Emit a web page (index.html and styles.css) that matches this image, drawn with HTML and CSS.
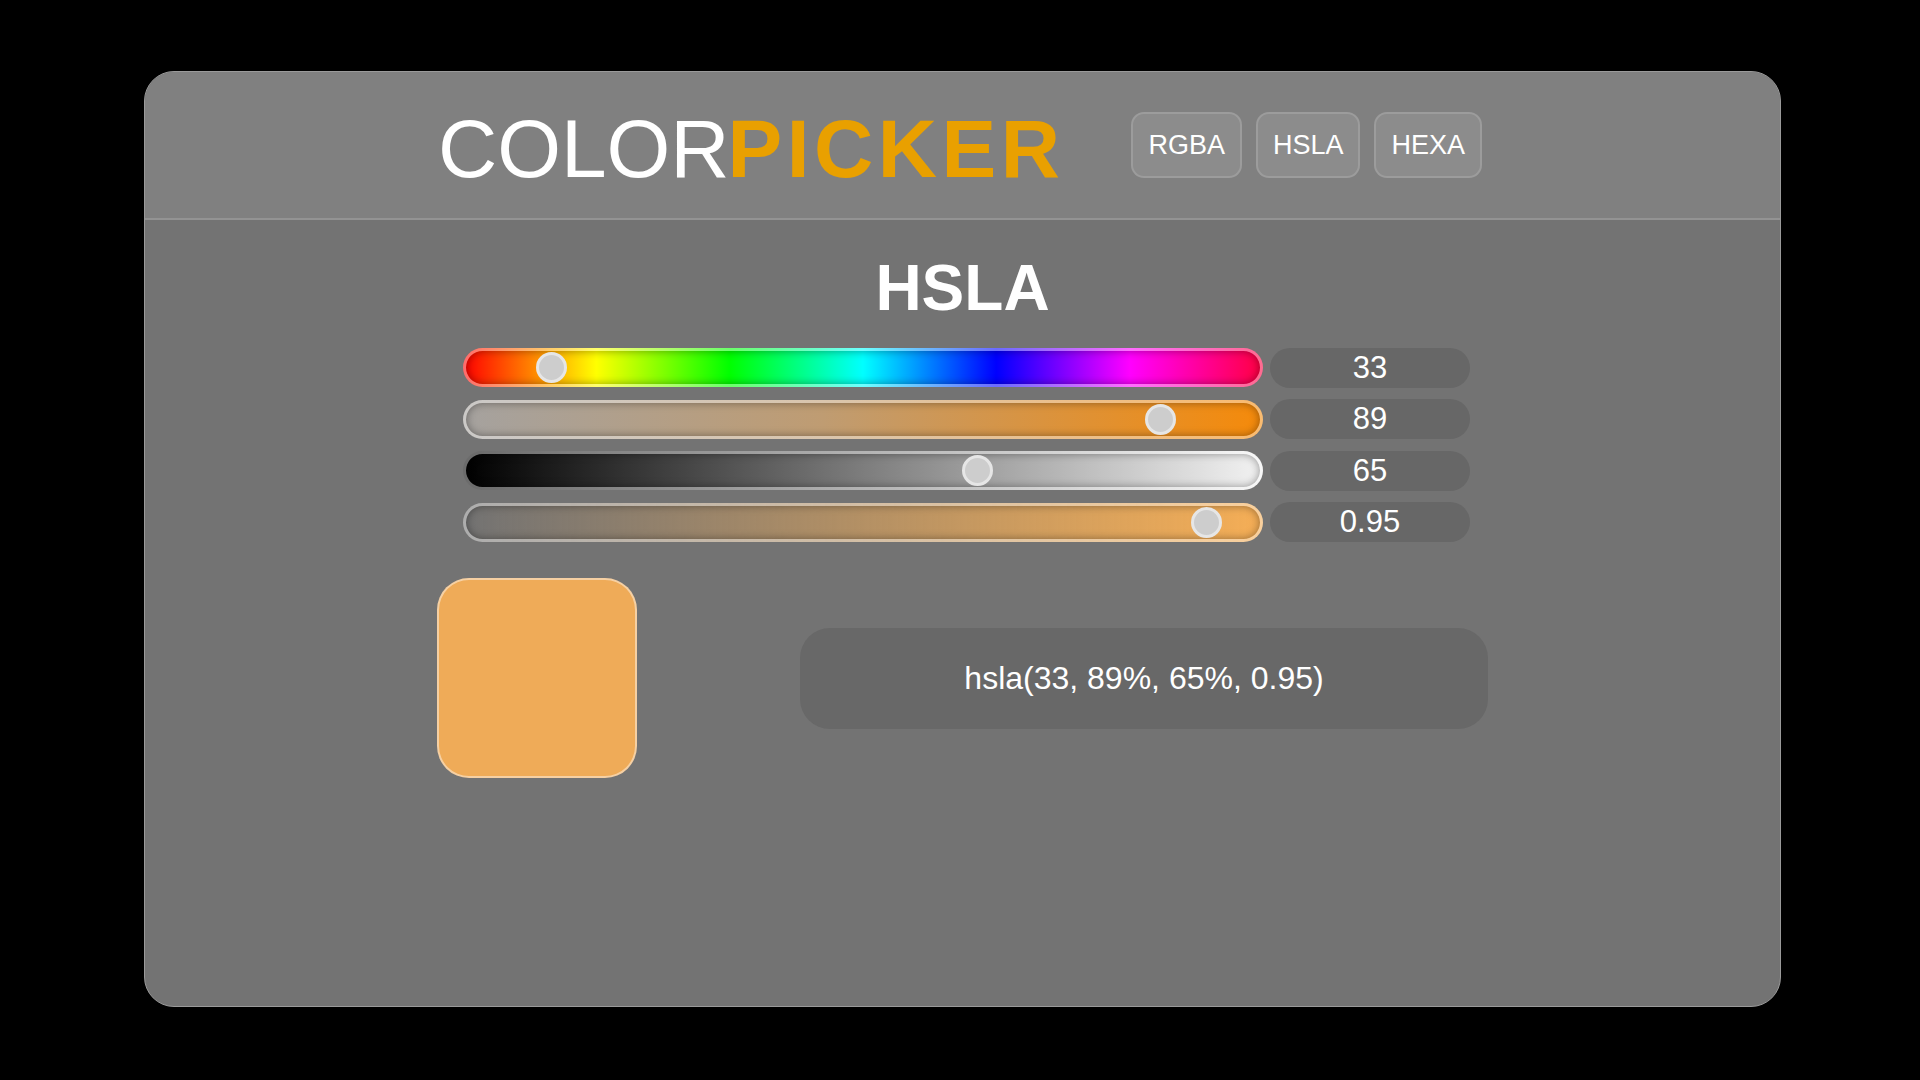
FILE: index.html
```html
<!DOCTYPE html>
<html lang="en">
<head>
<meta charset="utf-8">
<title>Color Picker</title>
<link rel="stylesheet" href="styles.css">
</head>
<body>
<div class="card">
  <header class="header">
    <h1 class="logo"><span class="logo-light">COLOR</span><span class="logo-bold">PICKER</span></h1>
    <nav class="modes">
      <button class="mode">RGBA</button>
      <button class="mode">HSLA</button>
      <button class="mode">HEXA</button>
    </nav>
  </header>
  <main class="body">
    <h2 class="mode-title">HSLA</h2>
    <div class="sliders">
      <div class="track track-hue"><div class="rail"><span class="thumb" style="left: 9.1667%"></span></div></div>
      <div class="value">33</div>
      <div class="track track-sat"><div class="rail"><span class="thumb" style="left: 89%"></span></div></div>
      <div class="value">89</div>
      <div class="track track-light"><div class="rail"><span class="thumb" style="left: 65%"></span></div></div>
      <div class="value">65</div>
      <div class="track track-alpha"><div class="rail"><span class="thumb" style="left: 95%"></span></div></div>
      <div class="value">0.95</div>
    </div>
    <div class="result">
      <div class="swatch"></div>
      <div class="output">hsla(33, 89%, 65%, 0.95)</div>
    </div>
  </main>
</div>
</body>
</html>
```

FILE: styles.css
```css
* { box-sizing: border-box; }

html, body {
  margin: 0;
  padding: 0;
  background: #000;
}

body {
  font-family: "Liberation Sans", Arial, sans-serif;
  color: #fff;
  width: 1920px;
  height: 1080px;
  padding-top: 71px;
  padding-left: 144px;
}

.card {
  width: 1637px;
  height: 936px;
  border: 1px solid #9a9a9a;
  border-radius: 30px;
  background: #737373;
  overflow: hidden;
}

.header {
  height: 148px;
  padding-right: 5px;
  background: #808080;
  border-bottom: 2px solid #939393;
  display: flex;
  align-items: center;
  justify-content: center;
  gap: 67px;
}

.logo {
  margin: 8px 0 0 0;
  font-size: 82px;
  line-height: 1.15;
  font-weight: 400;
  white-space: nowrap;
}

.logo-light { color: #fff; }

.logo-bold {
  color: #e9a000;
  font-weight: 700;
  letter-spacing: 4.5px;
  margin-left: -2px;
}

.modes {
  display: flex;
  gap: 14px;
}

.mode {
  height: 66px;
  padding: 0 15px;
  border: 2px solid rgba(255, 255, 255, 0.14);
  border-radius: 13px;
  background: #8c8c8c;
  color: #fff;
  font-family: "Liberation Sans", Arial, sans-serif;
  font-size: 27px;
  cursor: pointer;
}

.body {
  padding-top: 32px;
  display: flex;
  flex-direction: column;
  align-items: center;
}

.mode-title {
  margin: 0;
  font-size: 64px;
  font-weight: 700;
  line-height: 1.15;
}

.sliders {
  margin: 22px 0 0 8px;
  display: grid;
  grid-template-columns: 800px 200px;
  column-gap: 7px;
  row-gap: 11.5px;
  align-items: center;
}

.track {
  height: 39px;
  border: 3px solid rgba(255, 255, 255, 0.42);
  border-radius: 20px;
  background-origin: border-box;
  background-clip: border-box;
  box-shadow: inset 0 0 9px rgba(0, 0, 0, 0.38);
}

.track-hue {
  background-image: linear-gradient(to right, #ff0000 0%, #ffff00 16.67%, #00ff00 33.33%, #00ffff 50%, #0000ff 66.67%, #ff00ff 83.33%, #ff0040 100%);
}

.track-sat {
  background-image: linear-gradient(to right, #a5a29f 0%, #bf9c72 45%, #f58a0a 100%);
}

.track-light {
  background-image: linear-gradient(to right, #000 0%, #7d7d7d 50%, #f2f2f2 100%);
}

.track-alpha {
  background-image: linear-gradient(to right, rgba(245, 174, 86, 0) 0%, rgba(245, 174, 86, 1) 100%);
}

.rail {
  position: relative;
  height: 100%;
  width: calc(100% - 31px);
}

.thumb {
  position: absolute;
  top: 50%;
  width: 31px;
  height: 31px;
  margin-top: -15.5px;
  border-radius: 50%;
  background: #cdcdcd;
  border: 3px solid #e6e6e6;
}

.value {
  height: 40px;
  border-radius: 20px;
  background: #676767;
  display: flex;
  align-items: center;
  justify-content: center;
  font-size: 31px;
}

.result {
  margin-top: 36px;
  width: 1051px;
  display: flex;
  align-items: center;
  justify-content: space-between;
}

.swatch {
  width: 200px;
  height: 200px;
  border-radius: 32px;
  background: hsla(33, 89%, 65%, 0.95);
  border: 2px solid rgba(255, 255, 255, 0.45);
  background-clip: border-box;
}

.output {
  width: 688px;
  height: 101px;
  border-radius: 30px;
  background: #686868;
  display: flex;
  align-items: center;
  justify-content: center;
  font-size: 32px;
}
```
